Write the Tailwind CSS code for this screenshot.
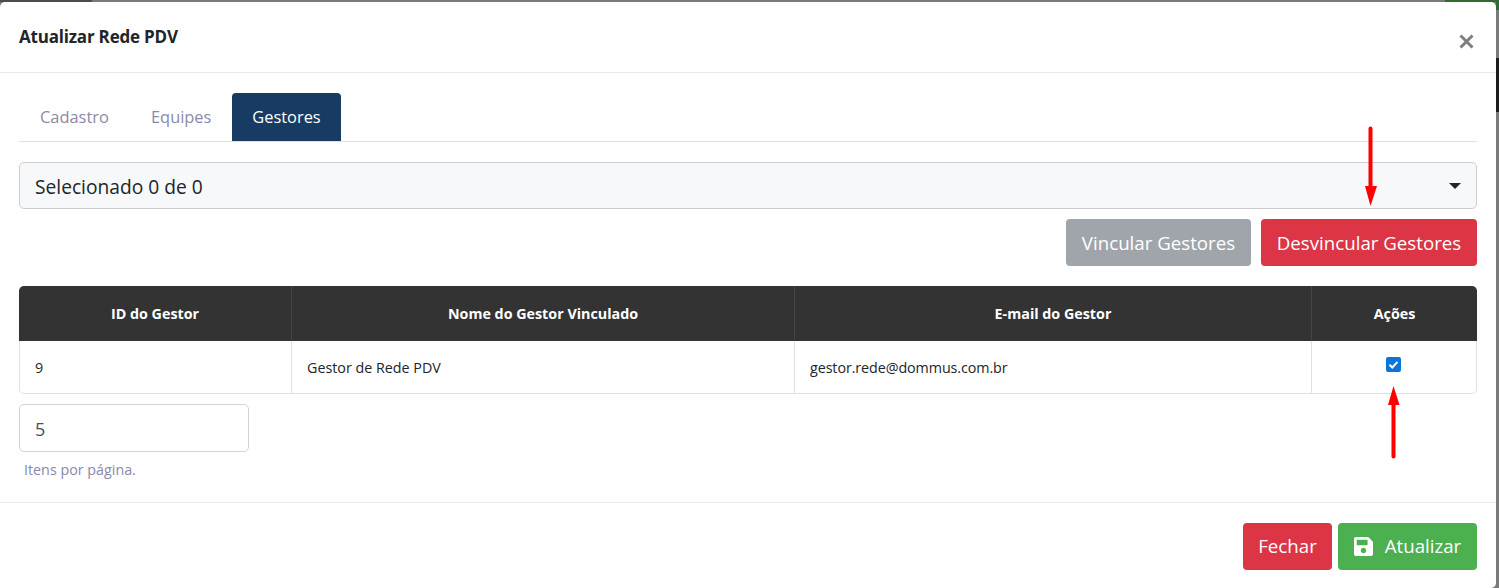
<!DOCTYPE html>
<html lang="pt-BR">
<head>
    <meta charset="UTF-8">
    <title>Atualizar Rede PDV</title>
    <script src="https://cdn.jsdelivr.net/npm/@tailwindcss/browser@4"></script>
</head>
<body class="bg-[#7a7a7a] font-['Open_Sans',sans-serif] text-[#212529] overflow-hidden">
    <div class="relative h-[588px] w-[1499px] overflow-hidden pt-[2px]">
        <!-- page behind the backdrop -->
        <div class="absolute left-0 top-0 h-[2px] w-[92px] bg-[#4d4d4d]"></div>
        <div class="absolute right-0 top-0 h-[2px] w-[54px] bg-[#2f6b33]"></div>
        <div class="absolute right-0 top-0 h-[10px] w-[3px] bg-[#2f6b33]"></div>
        <div class="absolute right-0 top-[58px] h-[54px] w-[3px] bg-[#1c1c1c]"></div>

        <!-- modal -->
        <div class="relative flex h-[586px] w-[1496px] flex-col rounded-t-[5px] rounded-br-[5px] bg-white">
            <header class="flex h-[71px] shrink-0 items-start justify-between border-b border-[#e9ecef] pl-[19px] pr-[22px]">
                <h5 class="mt-[23px] text-[17px] leading-[24px] font-bold tracking-[-0.2px]">Atualizar Rede PDV</h5>
                <svg class="mt-[32px]" width="15" height="15" viewBox="0 0 15 15">
                    <path d="M1.500 1.500 13.500 13.500M13.500 1.500 1.500 13.500" stroke="#7f7f7f" stroke-width="3" fill="none"/>
                </svg>
            </header>

            <div class="flex-1 px-[19px] pt-[20px]">
                <!-- tabs -->
                <nav class="flex h-[49px] border-b border-[#dee2e6] text-[16.400px] text-[#8a8aa8]">
                    <a class="flex h-[48px] w-[111px] items-center pl-[21px]">Cadastro</a>
                    <a class="flex h-[48px] w-[102px] items-center pl-[21px]">Equipes</a>
                    <a class="flex h-[48px] w-[109px] items-center justify-center rounded-t-[4px] bg-[#183b64] text-white">Gestores</a>
                </nav>

                <!-- select -->
                <div class="mt-[20px] flex h-[47px] items-center justify-between rounded-[5px] border border-[#cccccc] bg-[#f7f8fa] pl-[15px] pr-[15px] text-[19.200px]">
                    <span class="pt-[3px]">Selecionado 0 de 0</span>
                    <span class="h-0 w-0 border-x-[6px] border-t-[6px] border-x-transparent border-t-[#212529]"></span>
                </div>

                <div class="mt-[10px] flex justify-end gap-[10px] text-[18.700px] text-white">
                    <button class="h-[47px] w-[185px] rounded-[4px] bg-[#a0a5ab] pt-[2px]">Vincular Gestores</button>
                    <button class="h-[47px] w-[216px] rounded-[4px] bg-[#dc3545] pt-[2px]">Desvincular Gestores</button>
                </div>

                <!-- table -->
                <table class="mt-[20px] w-full table-fixed border-separate border-spacing-0 text-[14.300px]">
                    <thead>
                        <tr class="h-[55px] bg-[#333333] text-white">
                            <th class="w-[273px] rounded-tl-[5px] border-r border-[#454545] font-bold">ID do Gestor</th>
                            <th class="w-[503px] border-r border-[#454545] font-bold">Nome do Gestor Vinculado</th>
                            <th class="w-[517px] border-r border-[#454545] font-bold">E-mail do Gestor</th>
                            <th class="rounded-tr-[5px] font-bold">Ações</th>
                        </tr>
                    </thead>
                    <tbody>
                        <tr class="h-[53px]">
                            <td class="rounded-bl-[5px] border-b border-l border-r border-[#dee2e6] pl-[15px] pt-[2px]">9</td>
                            <td class="border-b border-r border-[#dee2e6] pl-[15px] pt-[2px]">Gestor de Rede PDV</td>
                            <td class="border-b border-r border-[#dee2e6] pl-[15px] pt-[2px] tracking-[-0.08px]">gestor.rede@dommus.com.br</td>
                            <td class="rounded-br-[5px] border-b border-r border-[#dee2e6] pb-[6px] pl-[74px]">
                                <span class="flex h-[15px] w-[15px] items-center justify-center rounded-[2px] bg-[#0b75d7]">
                                    <svg width="11" height="11" viewBox="0 0 11 11"><path d="M1.500 5.800 4.300 8.500 9.500 2.800" stroke="#fff" stroke-width="2" fill="none"/></svg>
                                </span>
                            </td>
                        </tr>
                    </tbody>
                </table>

                <!-- page size -->
                <div class="mt-[10px] flex h-[48px] w-[230px] items-center rounded-[5px] border border-[#ced4da] pl-[15px] pt-[2px] text-[18px] text-[#495057]">5</div>
                <p class="mt-[8px] pl-[5px] text-[14.300px] leading-[20px] text-[#8a8aa8]">Itens por página.</p>
            </div>

            <footer class="flex h-[86px] shrink-0 items-start justify-end gap-[6px] border-t border-[#e9ecef] pr-[19px] pt-[20px] text-[18.700px] text-white">
                <button class="h-[47px] w-[89px] rounded-[4px] bg-[#dc3545]">Fechar</button>
                <button class="flex h-[47px] w-[139px] items-center justify-center gap-[12px] rounded-[4px] bg-[#4caf50]">
                    <svg width="19" height="19" viewBox="0 32 448 448" fill="#fff"><path d="M433.900 129.900l-83.900-83.900A48 48 0 0 0 316.100 32H48C21.500 32 0 53.500 0 80v352c0 26.500 21.500 48 48 48h352c26.500 0 48-21.500 48-48V163.900a48 48 0 0 0-14.100-34zM224 416c-35.300 0-64-28.700-64-64 0-35.300 28.700-64 64-64s64 28.700 64 64c0 35.300-28.700 64-64 64zm96-304.500V212c0 6.600-5.400 12-12 12H76c-6.600 0-12-5.400-12-12V108c0-6.600 5.400-12 12-12h228.500c3.200 0 6.200 1.300 8.500 3.500l3.500 3.500c2.200 2.200 3.500 5.300 3.500 8.500z"/></svg>
                    <span>Atualizar</span>
                </button>
            </footer>
        </div>

        <!-- annotation arrows -->
        <svg class="absolute left-0 top-0" width="1499" height="588" fill="none">
            <path d="M1370.500 128.500V190" stroke="#ff0000" stroke-width="4" stroke-linecap="round"/>
            <path d="M1370.500 206 1365 186H1377Z" fill="#ff0000"/>
            <path d="M1393.500 456.500V400" stroke="#ff0000" stroke-width="4" stroke-linecap="round"/>
            <path d="M1393.500 386 1388 405H1399.500Z" fill="#ff0000"/>
        </svg>
    </div>
</body>
</html>
